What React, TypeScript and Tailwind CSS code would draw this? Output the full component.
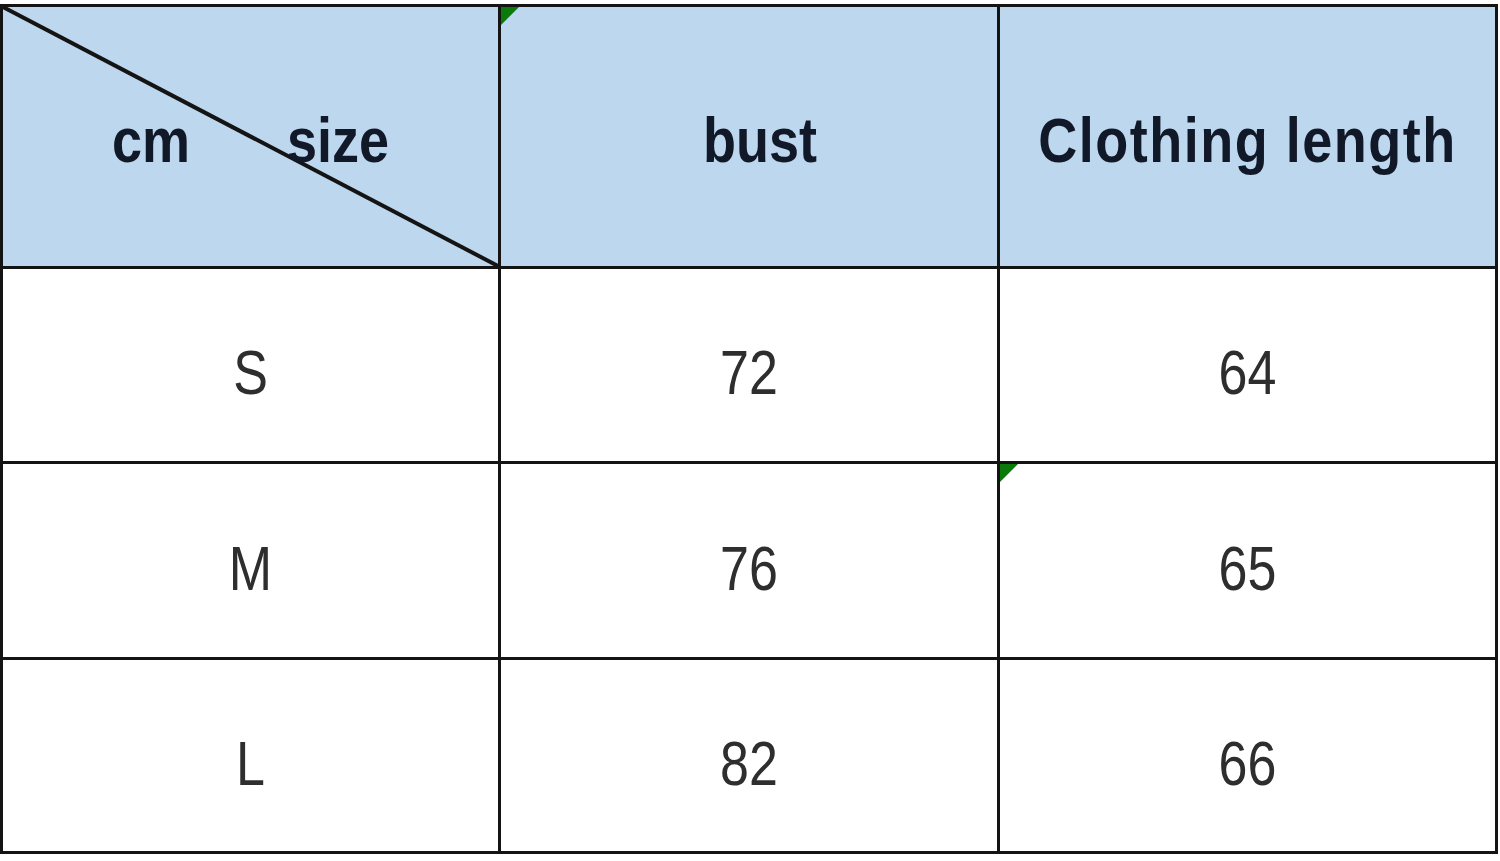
import React from 'react';

const rows = [
  { size: 'S', bust: '72', length: '64' },
  { size: 'M', bust: '76', length: '65' },
  { size: 'L', bust: '82', length: '66' },
];

const font = { fontFamily: '"Liberation Sans", Arial, sans-serif' };

const Flag = () => (
  <svg className="absolute left-0 top-0" width="18" height="18" viewBox="0 0 18 18">
    <polygon points="0,0 18,0 0,18" fill="#0b7a0b" />
  </svg>
);

export default function App() {
  return (
    <div className="min-h-screen w-full bg-white pt-1" style={font}>
      <div className="grid w-[1498px] grid-cols-[495px_496px_495px] grid-rows-[259px_192px_193px_191px] gap-[3px] bg-[#141414] p-[3px]">
        {/* header */}
        <div className="relative flex items-center justify-center gap-[97px] bg-[#bdd7ee] pt-[7px] text-[54px] font-bold text-[#111827]">
          <svg className="absolute inset-0 h-full w-full" viewBox="0 0 495 259" preserveAspectRatio="none">
            <line x1="0" y1="0" x2="495" y2="259" stroke="#141414" strokeWidth="4" />
          </svg>
          <span className="relative inline-block scale-y-[1.15] leading-none">cm</span>
          <span className="relative inline-block scale-y-[1.15] leading-none">size</span>
        </div>
        <div className="relative flex items-center justify-center bg-[#bdd7ee] pl-[22px] pt-[7px] text-[54px] font-bold text-[#111827]">
          <Flag />
          <span className="inline-block scale-y-[1.15] leading-none">bust</span>
        </div>
        <div className="flex items-center justify-center bg-[#bdd7ee] pt-[7px] text-[54px] font-bold text-[#111827]">
          <span className="inline-block scale-y-[1.15] leading-none tracking-[1.5px]">Clothing length</span>
        </div>

        {rows.map((r, i) => (
          <React.Fragment key={r.size}>
            <div className="flex items-center justify-center bg-white pt-[14px] text-[52px] text-[#2e2e2e]">
              <span className="inline-block scale-y-[1.2] leading-none">{r.size}</span>
            </div>
            <div className="flex items-center justify-center bg-white pt-[14px] text-[52px] text-[#2e2e2e]">
              <span className="inline-block scale-y-[1.2] leading-none">{r.bust}</span>
            </div>
            <div className="relative flex items-center justify-center bg-white pt-[14px] text-[52px] text-[#2e2e2e]">
              {i === 1 && <Flag />}
              <span className="inline-block scale-y-[1.2] leading-none">{r.length}</span>
            </div>
          </React.Fragment>
        ))}
      </div>
    </div>
  );
}
